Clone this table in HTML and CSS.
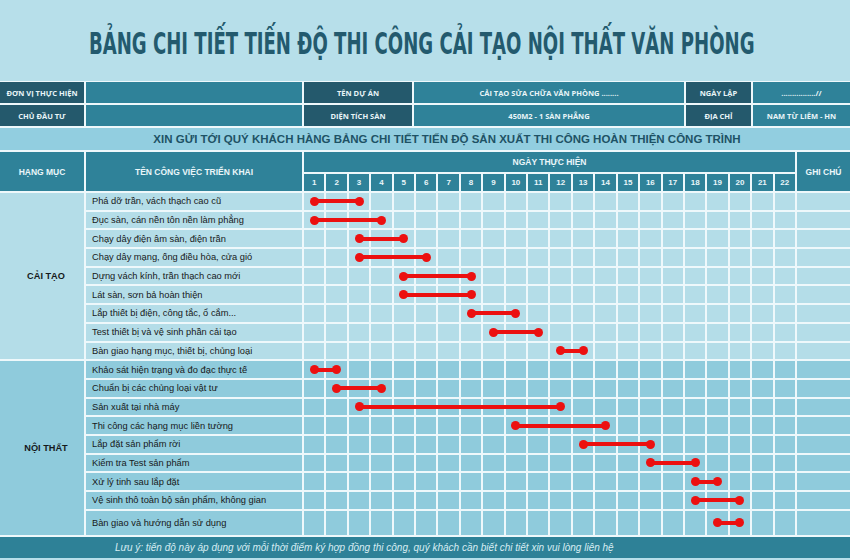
FILE: index.html
```html
<!DOCTYPE html>
<html lang="vi">
<head>
<meta charset="utf-8">
<title>Bảng chi tiết tiến độ</title>
<link rel="stylesheet" href="styles.css">
</head>
<body>
<div class="page">
  <header class="title-wrap"><h1 class="title">BẢNG CHI TIẾT TIẾN ĐỘ THI CÔNG CẢI TẠO NỘI THẤT VĂN PHÒNG</h1></header>
  <div class="board">
    <div class="info">
      <div class="lbl">ĐƠN VỊ THỰC HIỆN</div><div class="val"></div><div class="lbl">TÊN DỰ ÁN</div><div class="val">CẢI TẠO SỬA CHỮA VĂN PHÒNG ........</div><div class="lbl">NGÀY LẬP</div><div class="val">................//</div>
      <div class="lbl">CHỦ ĐẦU TƯ</div><div class="val"></div><div class="lbl">DIỆN TÍCH SÀN</div><div class="val">450M2 - 1 SÀN PHẲNG</div><div class="lbl">ĐỊA CHỈ</div><div class="val">NAM TỪ LIÊM - HN</div>
    </div>
    <div class="band">XIN GỬI TỚI QUÝ KHÁCH HÀNG BẢNG CHI TIẾT TIẾN ĐỘ SẢN XUẤT THI CÔNG HOÀN THIỆN CÔNG TRÌNH</div>
    <div class="sheet">
      <div class="hd cat-h">HẠNG MỤC</div>
      <div class="hd task-h">TÊN CÔNG VIỆC TRIỂN KHAI</div>
      <div class="hd days-h">NGÀY THỰC HIỆN</div>
      <div class="hd note-h">GHI CHÚ</div>
      <div class="num">1</div><div class="num">2</div><div class="num">3</div><div class="num">4</div><div class="num">5</div><div class="num">6</div><div class="num">7</div><div class="num">8</div><div class="num">9</div><div class="num">10</div><div class="num">11</div><div class="num">12</div><div class="num">13</div><div class="num">14</div><div class="num">15</div><div class="num">16</div><div class="num">17</div><div class="num">18</div><div class="num">19</div><div class="num">20</div><div class="num">21</div><div class="num">22</div>

      <div class="cat cat-a">CẢI TẠO</div>
      <div class="cat cat-b">NỘI THẤT</div>

      <div class="row ra"><div class="task">Phá dỡ trần, vách thạch cao cũ</div>
        <i class="s"><b class="bar" style="--n:2"></b></i>
        <i></i><i></i><i></i><i></i><i></i> <i></i><i></i><i></i><i></i><i></i> <i></i><i></i><i></i><i></i><i></i> <i></i><i></i><i></i><i></i><i></i> <i></i>
        <i class="note"></i></div>
      <div class="row ra"><div class="task">Đục sàn, cán nền tôn nền làm phẳng</div>
        <i class="s"><b class="bar" style="--n:3"></b></i>
        <i></i><i></i><i></i><i></i><i></i> <i></i><i></i><i></i><i></i><i></i> <i></i><i></i><i></i><i></i><i></i> <i></i><i></i><i></i><i></i><i></i> <i></i>
        <i class="note"></i></div>
      <div class="row ra"><div class="task">Chạy dây điện âm sàn, điện trần</div>
        <i></i><i></i>
        <i class="s"><b class="bar" style="--n:2"></b></i>
        <i></i><i></i><i></i><i></i><i></i> <i></i><i></i><i></i><i></i><i></i> <i></i><i></i><i></i><i></i><i></i> <i></i><i></i><i></i><i></i>
        <i class="note"></i></div>
      <div class="row ra"><div class="task">Chạy dây mạng, ống điều hòa, cửa gió</div>
        <i></i><i></i>
        <i class="s"><b class="bar" style="--n:3"></b></i>
        <i></i><i></i><i></i><i></i><i></i> <i></i><i></i><i></i><i></i><i></i> <i></i><i></i><i></i><i></i><i></i> <i></i><i></i><i></i><i></i>
        <i class="note"></i></div>
      <div class="row ra"><div class="task">Dựng vách kính, trần thạch cao mới</div>
        <i></i><i></i><i></i><i></i>
        <i class="s"><b class="bar" style="--n:3"></b></i>
        <i></i><i></i><i></i><i></i><i></i> <i></i><i></i><i></i><i></i><i></i> <i></i><i></i><i></i><i></i><i></i> <i></i><i></i>
        <i class="note"></i></div>
      <div class="row ra"><div class="task">Lát sàn, sơn bả hoàn thiện</div>
        <i></i><i></i><i></i><i></i>
        <i class="s"><b class="bar" style="--n:3"></b></i>
        <i></i><i></i><i></i><i></i><i></i> <i></i><i></i><i></i><i></i><i></i> <i></i><i></i><i></i><i></i><i></i> <i></i><i></i>
        <i class="note"></i></div>
      <div class="row ra"><div class="task">Lắp thiết bị điện, công tắc, ổ cắm...</div>
        <i></i><i></i><i></i><i></i><i></i> <i></i><i></i>
        <i class="s"><b class="bar" style="--n:2"></b></i>
        <i></i><i></i><i></i><i></i><i></i> <i></i><i></i><i></i><i></i><i></i> <i></i><i></i><i></i><i></i>
        <i class="note"></i></div>
      <div class="row ra"><div class="task">Test thiết bị và vệ sinh phần cải tạo</div>
        <i></i><i></i><i></i><i></i><i></i> <i></i><i></i><i></i>
        <i class="s"><b class="bar" style="--n:2"></b></i>
        <i></i><i></i><i></i><i></i><i></i> <i></i><i></i><i></i><i></i><i></i> <i></i><i></i><i></i>
        <i class="note"></i></div>
      <div class="row ra"><div class="task">Bàn giao hạng mục, thiết bị, chủng loại</div>
        <i></i><i></i><i></i><i></i><i></i> <i></i><i></i><i></i><i></i><i></i> <i></i>
        <i class="s"><b class="bar" style="--n:1"></b></i>
        <i></i><i></i><i></i><i></i><i></i> <i></i><i></i><i></i><i></i><i></i>
        <i class="note"></i></div>

      <div class="row rb"><div class="task">Khảo sát hiện trạng và đo đạc thực tế</div>
        <i class="s"><b class="bar" style="--n:1"></b></i>
        <i></i><i></i><i></i><i></i><i></i> <i></i><i></i><i></i><i></i><i></i> <i></i><i></i><i></i><i></i><i></i> <i></i><i></i><i></i><i></i><i></i> <i></i>
        <i class="note"></i></div>
      <div class="row rb"><div class="task">Chuẩn bị các chủng loại vật tư</div>
        <i></i>
        <i class="s"><b class="bar" style="--n:2"></b></i>
        <i></i><i></i><i></i><i></i><i></i> <i></i><i></i><i></i><i></i><i></i> <i></i><i></i><i></i><i></i><i></i> <i></i><i></i><i></i><i></i><i></i>
        <i class="note"></i></div>
      <div class="row rb"><div class="task">Sản xuất tại nhà máy</div>
        <i></i><i></i>
        <i class="s"><b class="bar" style="--n:9"></b></i>
        <i></i><i></i><i></i><i></i><i></i> <i></i><i></i><i></i><i></i><i></i> <i></i><i></i><i></i><i></i><i></i> <i></i><i></i><i></i><i></i>
        <i class="note"></i></div>
      <div class="row rb"><div class="task">Thi công các hạng mục liền tường</div>
        <i></i><i></i><i></i><i></i><i></i> <i></i><i></i><i></i><i></i>
        <i class="s"><b class="bar" style="--n:4"></b></i>
        <i></i><i></i><i></i><i></i><i></i> <i></i><i></i><i></i><i></i><i></i> <i></i><i></i>
        <i class="note"></i></div>
      <div class="row rb"><div class="task">Lắp đặt sản phẩm rời</div>
        <i></i><i></i><i></i><i></i><i></i> <i></i><i></i><i></i><i></i><i></i> <i></i><i></i>
        <i class="s"><b class="bar" style="--n:3"></b></i>
        <i></i><i></i><i></i><i></i><i></i> <i></i><i></i><i></i><i></i>
        <i class="note"></i></div>
      <div class="row rb"><div class="task">Kiểm tra Test sản phẩm</div>
        <i></i><i></i><i></i><i></i><i></i> <i></i><i></i><i></i><i></i><i></i> <i></i><i></i><i></i><i></i><i></i>
        <i class="s"><b class="bar" style="--n:2"></b></i>
        <i></i><i></i><i></i><i></i><i></i> <i></i>
        <i class="note"></i></div>
      <div class="row rb"><div class="task">Xử lý tinh sau lắp đặt</div>
        <i></i><i></i><i></i><i></i><i></i> <i></i><i></i><i></i><i></i><i></i> <i></i><i></i><i></i><i></i><i></i> <i></i><i></i>
        <i class="s"><b class="bar" style="--n:1"></b></i>
        <i></i><i></i><i></i><i></i>
        <i class="note"></i></div>
      <div class="row rb"><div class="task">Vệ sinh thô toàn bộ sản phẩm, không gian</div>
        <i></i><i></i><i></i><i></i><i></i> <i></i><i></i><i></i><i></i><i></i> <i></i><i></i><i></i><i></i><i></i> <i></i><i></i>
        <i class="s"><b class="bar" style="--n:2"></b></i>
        <i></i><i></i><i></i><i></i>
        <i class="note"></i></div>
      <div class="row rb"><div class="task">Bàn giao và hướng dẫn sử dụng</div>
        <i></i><i></i><i></i><i></i><i></i> <i></i><i></i><i></i><i></i><i></i> <i></i><i></i><i></i><i></i><i></i> <i></i><i></i><i></i>
        <i class="s"><b class="bar" style="--n:1"></b></i>
        <i></i><i></i><i></i>
        <i class="note"></i></div>
    </div>
    <div class="foot">Lưu ý: tiến độ này áp dụng với mỗi thời điểm ký hợp đồng thi công, quý khách cần biết chi tiết xin vui lòng liên hệ</div>
  </div>
</div>
</body>
</html>
```

FILE: styles.css
```css
* { box-sizing: border-box; margin: 0; padding: 0; }
html, body { background: #b7dfea; }
body {
  width: 850px;
  height: 560px;
  overflow: hidden;
  font-family: "Liberation Sans", Arial, sans-serif;
}
.page { width: 850px; height: 560px; background: #b7dfea; }

.title-wrap {
  height: 81px;
  display: flex;
  align-items: center;
  justify-content: center;
  padding-top: 6px;
  padding-right: 6px;
}
.title {
  font-family: "DejaVu Sans Condensed", "DejaVu Sans", sans-serif;
  font-weight: 700;
  font-size: 30px;
  color: #235a6e;
  white-space: nowrap;
  transform: scaleX(0.67);
}

.board {
  background: #eef8fb;
  display: flex;
  flex-direction: column;
  gap: 2px;
  padding-top: 1px;
}

.info {
  display: grid;
  grid-template-columns: 84px 216px 108px 270px 65px 1fr;
  grid-auto-rows: 21px;
  gap: 2px;
}
.info > div {
  display: flex;
  align-items: center;
  justify-content: center;
  font-family: "Open Sans", "Liberation Sans", sans-serif;
  font-weight: 700;
  font-size: 7.5px;
  color: #e9f5f8;
  white-space: nowrap;
}
.lbl { background: #24596c; }
.val { background: #2f8299; }

.band {
  height: 22px;
  background: #92cee0;
  display: flex;
  align-items: center;
  justify-content: center;
  padding-left: 44px;
  font-weight: 700;
  font-size: 11.5px;
  color: #1e5265;
  white-space: nowrap;
}

.sheet {
  display: grid;
  grid-template-columns: 84px 216px repeat(22, minmax(0, 1fr)) 53px;
  grid-template-rows: 20px 17px repeat(17, 16.7px) 24px;
  gap: 2px;
}
.hd, .num {
  background: #2f8299;
  color: #eaf6f9;
  font-weight: 700;
  display: flex;
  align-items: center;
  justify-content: center;
  white-space: nowrap;
}
.hd { font-size: 8.5px; }
.num { font-size: 8px; }
.cat-h { grid-column: 1; grid-row: 1 / 3; }
.task-h { grid-column: 2; grid-row: 1 / 3; }
.days-h { grid-column: 3 / 25; grid-row: 1; }
.note-h { grid-column: 25; grid-row: 1 / 3; }

.cat {
  grid-column: 1;
  display: flex;
  align-items: center;
  justify-content: center;
  padding-left: 8px;
  font-weight: 700;
  font-size: 9.2px;
  color: #15191b;
}
.cat-a { grid-row: 3 / 12; background: #b4dde8; }
.cat-b { grid-row: 12 / 21; background: #8fcbdc; }

.row { display: contents; }
.ra > * { background: #b4dde8; }
.rb > * { background: #8fcbdc; }
.row i { display: block; }
.row .note { grid-column: 25; }

.task {
  grid-column: 2;
  display: flex;
  align-items: center;
  padding-left: 6px;
  font-size: 9.3px;
  color: #17191a;
  white-space: nowrap;
}

.s { position: relative; }
.bar {
  position: absolute;
  left: 50%;
  top: 50%;
  width: calc(var(--n) * (100% + 2px));
  height: 4px;
  margin-top: -2px;
  background: #ec1010;
  z-index: 2;
}
.bar::before, .bar::after {
  content: "";
  position: absolute;
  top: -2.5px;
  width: 9px;
  height: 9px;
  border-radius: 50%;
  background: #ec1010;
}
.bar::before { left: -4.5px; }
.bar::after { right: -4.5px; }

.foot {
  height: 21.5px;
  background: #2e8197;
  display: flex;
  align-items: center;
  padding-left: 115px;
  font-style: italic;
  font-size: 10px;
  color: #d7edf3;
  white-space: nowrap;
}
```
